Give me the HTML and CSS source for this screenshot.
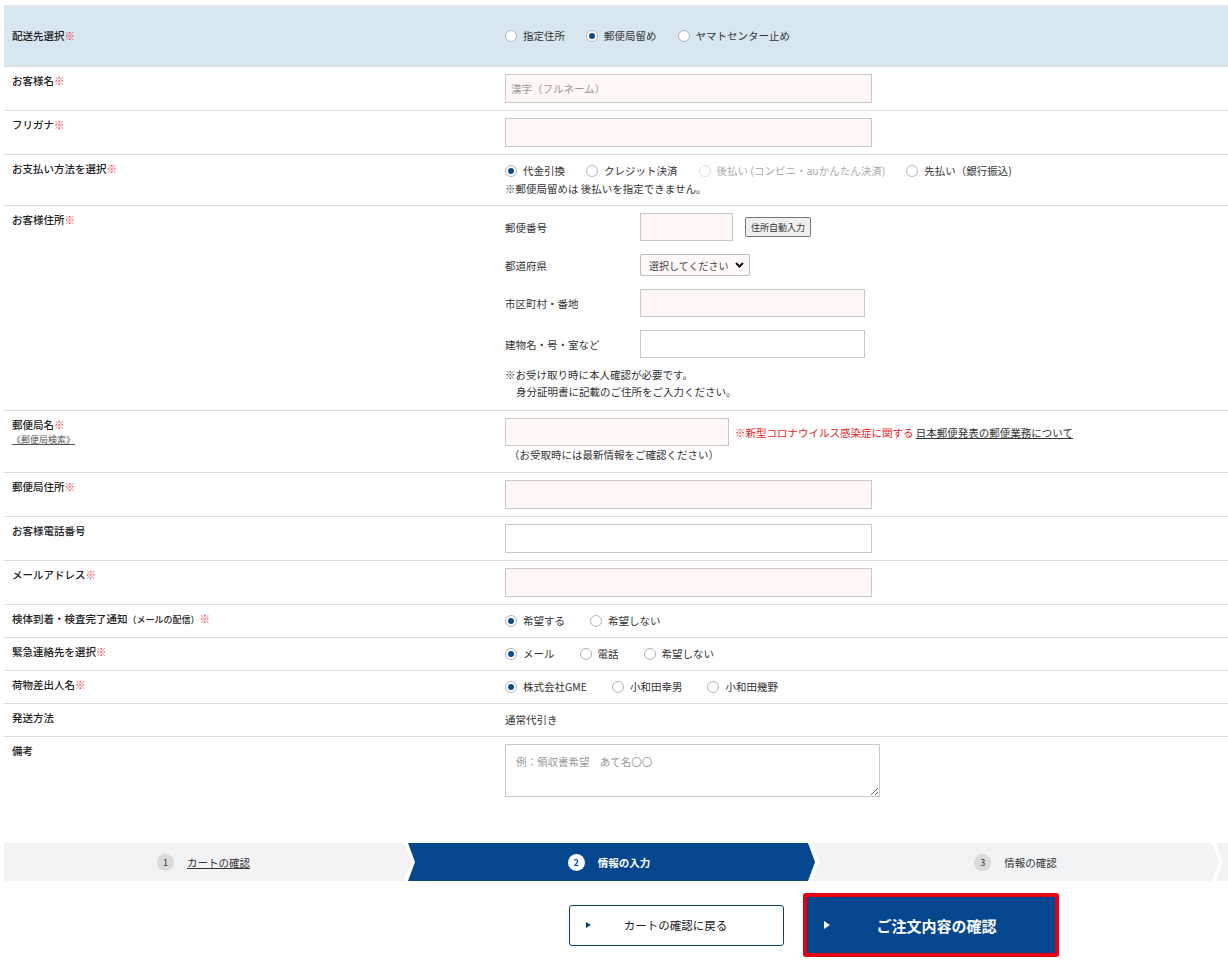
FILE: index.html
```html
<!DOCTYPE html>
<html lang="ja">
<head>
<meta charset="utf-8">
<title>情報の入力</title>
<link rel="stylesheet" href="styles.css">
</head>
<body>
<div class="page">
  <div class="form">
    <div class="row head">
      <div class="label">配送先選択<span class="req">※</span></div>
      <div class="value radios">
        <label class="radio"><span class="dot"></span>指定住所</label>
        <label class="radio on"><span class="dot"></span>郵便局留め</label>
        <label class="radio"><span class="dot"></span>ヤマトセンター止め</label>
      </div>
    </div>

    <div class="row">
      <div class="label">お客様名<span class="req">※</span></div>
      <div class="value"><input class="inp inp-lg" type="text" placeholder="漢字（フルネーム）"></div>
    </div>

    <div class="row">
      <div class="label">フリガナ<span class="req">※</span></div>
      <div class="value"><input class="inp inp-lg" type="text"></div>
    </div>

    <div class="row">
      <div class="label">お支払い方法を選択<span class="req">※</span></div>
      <div class="value pay">
        <div class="radios">
          <label class="radio on"><span class="dot"></span>代金引換</label>
          <label class="radio"><span class="dot"></span>クレジット決済</label>
          <label class="radio dis"><span class="dot"></span>後払い (コンビニ・auかんたん決済)</label>
          <label class="radio"><span class="dot"></span>先払い（銀行振込)</label>
        </div>
        <div>※郵便局留めは 後払いを指定できません。</div>
      </div>
    </div>

    <div class="row">
      <div class="label">お客様住所<span class="req">※</span></div>
      <div class="value">
        <div class="addr">
          <div class="addr-label">郵便番号</div>
          <div class="addr-field"><input class="inp inp-zip" type="text"><button class="btn-auto" type="button">住所自動入力</button></div>
          <div class="addr-label">都道府県</div>
          <div class="addr-field">
            <div class="select">選択してください<svg class="chev" width="9" height="6" viewBox="0 0 9 6"><path d="M1 1 L4.5 4.5 L8 1" fill="none" stroke="#111" stroke-width="2"/></svg></div>
          </div>
          <div class="addr-label">市区町村・番地</div>
          <div class="addr-field"><input class="inp inp-md" type="text"></div>
          <div class="addr-label">建物名・号・室など</div>
          <div class="addr-field"><input class="inp inp-md inp-white" type="text"></div>
        </div>
        <div class="addr-note">※お受け取り時に本人確認が必要です。<br><span class="indent">身分証明書に記載のご住所をご入力ください。</span></div>
      </div>
    </div>

    <div class="row">
      <div class="label">郵便局名<span class="req">※</span><br><a class="sublink">《郵便局検索》</a></div>
      <div class="value po">
        <div class="po-line">
          <input class="inp inp-po" type="text">
          <span><span class="red">※新型コロナウイルス感染症に関する</span> <a class="link">日本郵便発表の郵便業務について</a></span>
        </div>
        <div class="po-hint">（お受取時には最新情報をご確認ください）</div>
      </div>
    </div>

    <div class="row">
      <div class="label">郵便局住所<span class="req">※</span></div>
      <div class="value"><input class="inp inp-lg" type="text"></div>
    </div>

    <div class="row">
      <div class="label">お客様電話番号</div>
      <div class="value"><input class="inp inp-lg inp-white" type="text"></div>
    </div>

    <div class="row">
      <div class="label">メールアドレス<span class="req">※</span></div>
      <div class="value"><input class="inp inp-lg" type="text"></div>
    </div>

    <div class="row">
      <div class="label">検体到着・検査完了通知<span class="small">（メールの配信）</span><span class="req">※</span></div>
      <div class="value radios wide">
        <label class="radio on"><span class="dot"></span>希望する</label>
        <label class="radio"><span class="dot"></span>希望しない</label>
      </div>
    </div>

    <div class="row">
      <div class="label">緊急連絡先を選択<span class="req">※</span></div>
      <div class="value radios wide">
        <label class="radio on"><span class="dot"></span>メール</label>
        <label class="radio"><span class="dot"></span>電話</label>
        <label class="radio"><span class="dot"></span>希望しない</label>
      </div>
    </div>

    <div class="row">
      <div class="label">荷物差出人名<span class="req">※</span></div>
      <div class="value radios wide">
        <label class="radio on"><span class="dot"></span>株式会社GME</label>
        <label class="radio"><span class="dot"></span>小和田幸男</label>
        <label class="radio"><span class="dot"></span>小和田幾野</label>
      </div>
    </div>

    <div class="row">
      <div class="label">発送方法</div>
      <div class="value plain">通常代引き</div>
    </div>

    <div class="row">
      <div class="label">備考</div>
      <div class="value"><textarea class="memo" placeholder="例：領収書希望　あて名〇〇"></textarea></div>
    </div>
  </div>

  <div class="steps">
    <div class="step first"><span class="num">1</span><a class="step-link">カートの確認</a></div>
    <div class="step current"><span class="num">2</span><span>情報の入力</span></div>
    <div class="step"><span class="num">3</span><span>情報の確認</span></div>
    <div class="step"></div>
  </div>

  <div class="actions">
    <a class="btn-back"><span class="tri"></span><span class="btn-text">カートの確認に戻る</span></a>
    <a class="btn-confirm"><span class="tri"></span><span class="btn-text">ご注文内容の確認</span></a>
  </div>
</div>
</body>
</html>
```

FILE: styles.css
```css
html, body {
  margin: 0;
  padding: 0;
  overflow: hidden;
  background: #fff;
}

body {
  font-family: "Noto Sans CJK JP", "Noto Sans", sans-serif;
  font-size: 10.5px;
  color: #333;
}

.page {
  width: 1619px;
  padding: 5px 0 0 4px;
}

/* form table */
.row {
  display: grid;
  grid-template-columns: 493px 1fr;
  border-top: 1px solid #dedede;
}

.row.head {
  border-top: 0;
  background: #d7e6ef;
  height: 61px;
  align-items: center;
}

.label {
  padding: 7px 8px;
  line-height: 14px;
  font-weight: 500;
  color: #222;
}

.value {
  padding: 7px 8px;
  line-height: 17px;
}

.head .label,
.head .value {
  padding-top: 0;
  padding-bottom: 0;
}

.value.wide,
.value.plain {
  padding-bottom: 8px;
}

.req {
  color: #ec1c24;
}

.small {
  font-size: 9px;
}

.sublink {
  display: inline-block;
  font-size: 9px;
  line-height: 16px;
  color: #555;
  text-decoration: underline;
  font-weight: 400;
}

/* radios */
.radios {
  display: flex;
  align-items: center;
}

.radio {
  display: inline-flex;
  align-items: center;
  margin-right: 21px;
}

.radios.wide .radio {
  margin-right: 25px;
}

.dot {
  width: 12px;
  height: 12px;
  box-sizing: border-box;
  border: 1px solid #b3b3b3;
  border-radius: 50%;
  background: #fff;
  margin-right: 6px;
  display: inline-flex;
  align-items: center;
  justify-content: center;
}

.radio.on .dot::after {
  content: "";
  width: 6px;
  height: 6px;
  border-radius: 50%;
  background: #0b4a8f;
}

.radio.dis {
  color: #aaa;
}

.radio.dis .dot {
  border-color: #dcdcdc;
}

.pay {
  line-height: 18px;
}

/* inputs */
.inp {
  display: block;
  box-sizing: border-box;
  height: 29px;
  margin: 0;
  padding: 0 5px;
  border: 1px solid #c8c8c8;
  border-radius: 0;
  background: #fff6f6;
  font: inherit;
  color: #333;
  outline: none;
}

.inp::placeholder {
  color: #999;
}

.inp-white {
  background: #fff;
}

.inp-lg { width: 367px; }
.inp-zip { width: 93px; height: 28px; }
.inp-md { width: 225px; height: 28px; }
.inp-po { width: 224px; height: 28px; }

/* address block */
.addr {
  display: grid;
  grid-template-columns: 135px auto;
  row-gap: 13px;
  align-items: center;
}

.addr-field {
  display: flex;
  align-items: center;
}

.btn-auto {
  margin-left: 12px;
  width: 66px;
  height: 20px;
  padding: 0;
  box-sizing: border-box;
  border: 1px solid #767676;
  border-radius: 2px;
  background: #efefef;
  font-family: inherit;
  font-size: 9px;
  color: #333;
}

.select {
  width: 110px;
  height: 22px;
  box-sizing: border-box;
  border: 1px solid #bdbdbd;
  border-radius: 2px;
  background: #fff8f8;
  display: flex;
  align-items: center;
  justify-content: space-between;
  padding: 0 5px 0 8px;
  font-size: 10px;
  color: #444;
}

.addr-note {
  margin-top: 8px;
  padding-bottom: 3px;
}

.indent {
  padding-left: 11px;
}

/* post office */
.po {
  padding-bottom: 9px;
}

.po-line {
  display: flex;
  align-items: center;
  gap: 6px;
}

.po-hint {
  padding-left: 4px;
}

.red {
  color: #ec1c24;
}

.link {
  color: #333;
  text-decoration: underline;
}

/* memo */
.memo {
  display: block;
  width: 375px;
  height: 53px;
  box-sizing: border-box;
  margin: 0;
  padding: 8px 10px;
  border: 1px solid #c8c8c8;
  font: inherit;
  color: #333;
  outline: none;
}

.memo::placeholder {
  color: #999;
}

/* steps */
.steps {
  display: flex;
  margin-top: 39px;
  height: 38px;
}

.step {
  flex: 0 0 407px;
  box-sizing: border-box;
  height: 38px;
  margin-left: -3px;
  display: flex;
  align-items: center;
  justify-content: center;
  gap: 13px;
  background: #f2f3f5;
  color: #333;
  clip-path: polygon(0 0, calc(100% - 7px) 0, 100% 50%, calc(100% - 7px) 100%, 0 100%, 7px 50%);
}

.step.first {
  margin-left: 0;
  padding-right: 8px;
  clip-path: polygon(0 0, calc(100% - 7px) 0, 100% 50%, calc(100% - 7px) 100%, 0 100%);
}

.num {
  width: 17px;
  height: 17px;
  border-radius: 50%;
  background: #dadada;
  color: #333;
  font-size: 9px;
  display: flex;
  align-items: center;
  justify-content: center;
}

.step-link {
  text-decoration: underline;
  color: #333;
}

.step.current {
  padding-right: 5px;
  background: #05478f;
  color: #fff;
  font-weight: 700;
}

.step.current .num {
  background: #fff;
  color: #05478f;
  font-weight: 700;
}

/* buttons */
.actions {
  display: flex;
  justify-content: center;
  align-items: center;
  gap: 19px;
  margin-top: 12px;
}

.btn-back {
  width: 215px;
  height: 41px;
  box-sizing: border-box;
  border: 1px solid #0d3f7c;
  border-radius: 3px;
  background: #fff;
  display: flex;
  align-items: center;
  padding: 0 22px 0 16px;
  font-size: 11.5px;
  color: #222;
}

.btn-back .tri {
  width: 0;
  height: 0;
  border-left: 5px solid #0d3f7c;
  border-top: 3.5px solid transparent;
  border-bottom: 3.5px solid transparent;
}

.btn-text {
  flex: 1;
  text-align: center;
}

.btn-confirm {
  width: 256px;
  height: 64px;
  box-sizing: border-box;
  border: 4px solid #e60012;
  border-radius: 3px;
  background: #05478f;
  color: #fff;
  font-weight: 700;
  font-size: 15px;
  display: flex;
  align-items: center;
  padding: 0 11px 0 17px;
}

.btn-confirm .tri {
  width: 0;
  height: 0;
  border-left: 6px solid #fff;
  border-top: 4.5px solid transparent;
  border-bottom: 4.5px solid transparent;
}
```
